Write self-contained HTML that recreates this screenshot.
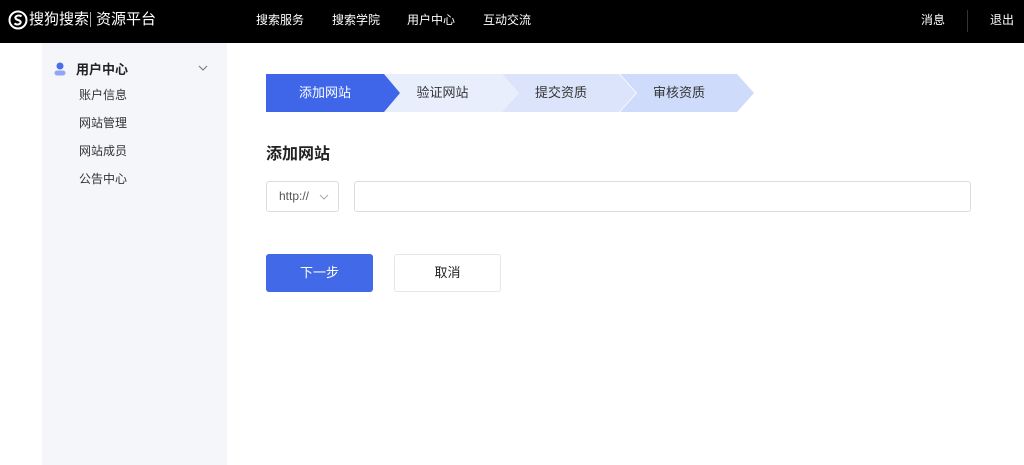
<!DOCTYPE html>
<html><head><meta charset="utf-8"><style>
*{margin:0;padding:0;box-sizing:border-box}
body{width:1024px;height:465px;overflow:hidden;background:#fff;font-family:"Liberation Sans","Noto Sans CJK SC",sans-serif;color:#333;position:relative}
.hd{position:absolute;left:0;top:0;width:1024px;height:43px;background:#000;color:#fff}
.hd span{position:absolute;top:13px;font-size:12px;line-height:14px}
.side{position:absolute;left:42px;top:43px;width:185px;height:422px;background:#f4f6fa}
.side .it{position:absolute;left:37px;font-size:12px;color:#333}
.step{position:absolute;top:74px;height:38px;font-size:13px;line-height:38px;text-align:center}
.abs{position:absolute}
</style></head><body>
<div class="hd">
<svg class="abs" style="left:8px;top:10px" width="20" height="20" viewBox="0 0 20 20"><circle cx="10" cy="10" r="8.5" fill="none" stroke="#fff" stroke-width="2"/><path d="M13.5 6.5C12.5 5.5 10 5 8.3 6.2 6.5 7.5 7.5 9.4 10 10 12.5 10.6 13.5 12.4 11.8 13.8 10 15 7.5 14.5 6.5 13.3" fill="none" stroke="#fff" stroke-width="2"/></svg>
<span style="left:29px;top:11px;font-size:15px;line-height:18px">搜狗搜索</span>
<span style="left:90px;top:12px;width:1px;height:15px;background:#aaa"></span>
<span style="left:96px;top:11px;font-size:15px;line-height:18px">资源平台</span>
<span style="left:256px">搜索服务</span>
<span style="left:332px">搜索学院</span>
<span style="left:407px">用户中心</span>
<span style="left:483px">互动交流</span>
<span style="left:921px">消息</span>
<span style="left:967px;top:10px;width:1px;height:22px;background:#333"></span>
<span style="left:990px">退出</span>
</div>
<div class="side">
<svg class="abs" style="left:12px;top:19px" width="12" height="14" viewBox="0 0 12 14"><circle cx="6" cy="4" r="3.5" fill="#4a6fe8"/><rect x="0.5" y="8.5" width="11" height="5" rx="2.5" fill="#8fa7f2"/></svg>
<div class="abs" style="left:34px;top:16px;font-size:13px;font-weight:bold;color:#222">用户中心</div>
<svg class="abs" style="left:156px;top:22px" width="10" height="6" viewBox="0 0 10 6"><path d="M1 1l4 4 4-4" fill="none" stroke="#777" stroke-width="1.1"/></svg>
<div class="it" style="top:43px">账户信息</div>
<div class="it" style="top:71px">网站管理</div>
<div class="it" style="top:99px">网站成员</div>
<div class="it" style="top:127px">公告中心</div>
</div>
<div class="step" style="left:620px;width:134px;background:#cfdbfb;clip-path:polygon(0 0,117px 0,134px 50%,117px 100%,0 100%,17px 50%)"><span style="margin-left:-16px">审核资质</span></div>
<div class="step" style="left:502px;width:134px;background:#dce4fb;clip-path:polygon(0 0,117px 0,134px 50%,117px 100%,0 100%,17px 50%)"><span style="margin-left:-16px">提交资质</span></div>
<div class="step" style="left:384px;width:135px;background:#e8eefc;clip-path:polygon(0 0,118px 0,135px 50%,118px 100%,0 100%)"><span style="margin-right:18px">验证网站</span></div>
<div class="step" style="left:266px;width:134px;background:#3f66e8;color:#fff;clip-path:polygon(0 0,118px 0,134px 50%,118px 100%,0 100%)"><span style="margin-right:16px">添加网站</span></div>
<div class="abs" style="left:266px;top:140px;font-size:16px;font-weight:bold;color:#222">添加网站</div>
<div class="abs" style="left:266px;top:181px;width:73px;height:31px;border:1px solid #dcdcdc;border-radius:3px;font-size:12px;line-height:29px;padding-left:12px;color:#555">http://</div>
<svg class="abs" style="left:319px;top:194px" width="10" height="6" viewBox="0 0 10 6"><path d="M1 1l4 4 4-4" fill="none" stroke="#aaa" stroke-width="1"/></svg>
<div class="abs" style="left:354px;top:181px;width:617px;height:31px;border:1px solid #dcdcdc;border-radius:3px"></div>
<div class="abs" style="left:266px;top:254px;width:107px;height:38px;background:#4169e8;border-radius:3px;color:#fff;font-size:13px;line-height:38px;text-align:center">下一步</div>
<div class="abs" style="left:394px;top:254px;width:107px;height:38px;border:1px solid #e6e6e6;border-radius:3px;font-size:13px;line-height:36px;text-align:center;color:#222">取消</div>
</body></html>
